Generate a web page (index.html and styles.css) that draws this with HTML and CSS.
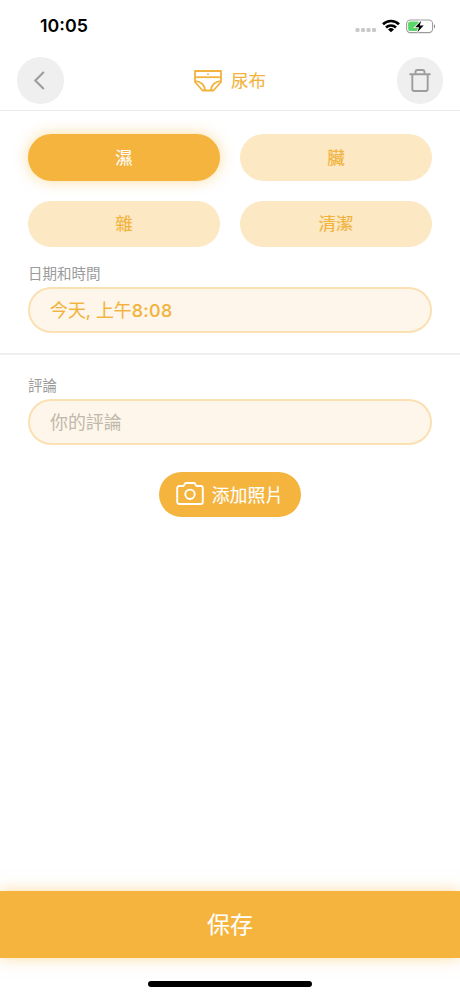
FILE: index.html
```html
<!DOCTYPE html>
<html lang="zh-Hant">
<head>
  <meta charset="UTF-8" />
  <meta name="viewport" content="width=device-width, initial-scale=1.0"/>
  <title>尿布</title>
  <link rel="stylesheet" href="styles.css">
</head>
<body>
  <div class="status">
    <span class="clock">10:05</span>
    <div class="status-icons">
      <svg class="dots" width="22" height="6" viewBox="0 0 22 6" fill="#c9c9c9">
        <rect x="0.5" y="1" width="4" height="4" rx="1.3"/>
        <rect x="6" y="1" width="4" height="4" rx="1.3"/>
        <rect x="11.5" y="1" width="4" height="4" rx="1.3"/>
        <rect x="17" y="1" width="4" height="4" rx="1.3"/>
      </svg>
      <svg class="wifi" width="18" height="14" viewBox="0 0 18 14" fill="none" stroke="#000" stroke-width="2.6">
        <path d="M1 5.2a11.6 11.6 0 0 1 16 0"/>
        <path d="M4 8.5a7.2 7.2 0 0 1 10 0"/>
        <path d="M9 13.3L6 10.5a4.3 4.3 0 0 1 6 0z" fill="#000" stroke="none"/>
      </svg>
      <svg class="battery" width="30" height="15" viewBox="0 0 30 15">
        <rect x="0.6" y="1" width="26" height="12.6" rx="3.8" fill="#fff" stroke="#9b9b9b" stroke-width="1.1"/>
        <rect x="2.1" y="2.5" width="11.4" height="9.6" rx="2.2" fill="#5bd769"/>
        <path d="M28 5.2c1.6.6 1.6 3.6 0 4.2z" fill="#8e8e8e"/>
        <path d="M15.3 1.8L9.2 8.2h3.9l-1.7 5 6.3-6.6h-4z" fill="#000" stroke="#fff" stroke-width="1.6" paint-order="stroke"/>
      </svg>
    </div>
  </div>

  <header class="header">
    <button class="round" aria-label="返回">
      <svg width="24" height="24" viewBox="0 0 24 24" fill="none" stroke="#9d9d9d" stroke-width="2.1">
        <path d="M15.3 3.500L7.300 11.500l8 8" stroke-linecap="round"/>
      </svg>
    </button>
    <h1 class="title">
      <svg width="28" height="22" viewBox="0 0 28 22" fill="none" stroke="#f2b33d" stroke-width="1.8" stroke-linejoin="round">
        <path d="M1 1h26v11l-7.500 8.500h-11L1 12z"/>
        <path d="M1 7.200h26"/>
        <path d="M1 11.200c5.500 0 9.800 3.500 10 9.300M27 11.200c-5.500 0-9.800 3.500-10 9.300"/>
        <circle cx="14" cy="4.200" r="0.9" fill="#f2b33d" stroke="none"/>
      </svg>
      <span>尿布</span>
    </h1>
    <button class="round" aria-label="刪除">
      <svg width="24" height="26" viewBox="0 0 24 26" fill="none" stroke="#9d9d9d" stroke-width="1.9" stroke-linejoin="round">
        <path d="M2.200 6.300h19.600" stroke-linecap="round"/>
        <path d="M4.300 6.300v14.700a2 2 0 0 0 2 2h11.400a2 2 0 0 0 2-2V6.300"/>
        <path d="M7.500 6.300V4a2 2 0 0 1 2-2h5a2 2 0 0 1 2 2v2.300"/>
      </svg>
    </button>
  </header>

  <section class="section">
    <div class="types">
      <button class="pill active">濕</button>
      <button class="pill">臟</button>
      <button class="pill">雜</button>
      <button class="pill">清潔</button>
    </div>
    <div class="label">日期和時間</div>
    <div class="field">今天, 上午<span class="time">8:08</span></div>
  </section>

  <section class="section notes">
    <div class="label">評論</div>
    <div class="field empty">你的評論</div>
    <button class="photo">
      <svg width="28" height="24" viewBox="0 0 28 24" fill="none" stroke="#fff" stroke-width="1.9" stroke-linejoin="round">
        <path d="M3.200 4h4.300l2-3h9l2 3h4.300a2 2 0 0 1 2 2v14a2 2 0 0 1-2 2H3.200a2 2 0 0 1-2-2V6a2 2 0 0 1 2-2z"/>
        <circle cx="14" cy="12.300" r="4.700"/>
      </svg>
      <span>添加照片</span>
    </button>
  </section>

  <footer class="footer">
    <button class="save">保存</button>
    <div class="home"></div>
  </footer>
</body>
</html>
```

FILE: styles.css
```css
* { box-sizing: border-box; }
body {
  margin: 0;
  height: 996px;
  background: #fff;
  color: #f2b33d;
  font-family: Inter, "Noto Sans CJK TC", sans-serif;
  display: flex; flex-direction: column;
  overflow: hidden;
}
button {
  border: 0; padding: 0; margin: 0;
  font-family: inherit; color: inherit;
}
svg { display: block; flex: none; }

/* regular weight, thickened a little */
.title, .pill, .field, .photo, .save {
  font-weight: 400;
  -webkit-text-stroke: 0.12px currentColor;
}

.status {
  height: 50px; flex: none;
  padding: 2px 24px 0 40px;
  display: flex; align-items: center; justify-content: space-between;
}
.clock {
  color: #000;
  font-size: 17.8px; font-weight: 600; line-height: 22px;
}
.status-icons { display: flex; align-items: center; }
.dots { margin: 8px 5px 0 0; }
.wifi { margin-right: 6px; }

.header {
  height: 61px; flex: none;
  padding: 1px 17px 0;
  border-bottom: 1.5px solid #ebebeb;
  display: flex; align-items: center; justify-content: space-between;
}
.round {
  width: 46.5px; height: 46.5px;
  border-radius: 50%;
  background: #efefef;
  display: flex; align-items: center; justify-content: center;
}
.title {
  margin: 0;
  display: flex; align-items: center; gap: 9px;
  font-size: 17.5px; line-height: 26px;
}
.title span { padding-top: 1px; }

.section {
  padding: 23px 28px 20px;
  border-bottom: 2px solid #efefef;
}
.types {
  display: grid;
  grid-template-columns: 1fr 1fr;
  gap: 20px;
}
.pill {
  height: 46.5px;
  padding-bottom: 2px;
  border-radius: 24px;
  background: #fce8c3;
  font-size: 17.5px;
}
.pill.active {
  background: #f4b43e;
  color: #fff;
  box-shadow: 0 0 14px rgba(245, 185, 65, 0.5);
}
.label {
  margin: 17px 0 3px;
  color: #9b9b9b;
  font-size: 14.5px; line-height: 20px;
}
.field {
  height: 46px;
  padding: 0 20px;
  border: 2px solid #fae0b2;
  border-radius: 23px;
  background: #fef6ea;
  font-size: 17.9px; line-height: 43px;
}
.time { font-weight: 500; letter-spacing: 0.3px; }
.field.empty { color: #c0b8ab; -webkit-text-stroke: 0; }

.notes { border: 0; padding-top: 21px; }
.notes .label { margin-top: 0; }
.photo {
  width: 142px; height: 45px;
  margin: 27px auto 0;
  padding: 0 1px 1px 0;
  border-radius: 23px;
  background: #f4b43e;
  color: #fff;
  display: flex; align-items: center; justify-content: center; gap: 8px;
  font-size: 17.9px;
}

.footer { margin-top: auto; }
.save {
  display: block;
  width: 100%; height: 67px;
  padding-bottom: 3px;
  background: #f4b43e;
  color: #fff;
  font-size: 23px;
  box-shadow: 0 0 14px rgba(245, 185, 65, 0.5);
}
.home {
  width: 164px; height: 6px;
  margin: 23px auto 9px;
  border-radius: 3px;
  background: #000;
}
```
